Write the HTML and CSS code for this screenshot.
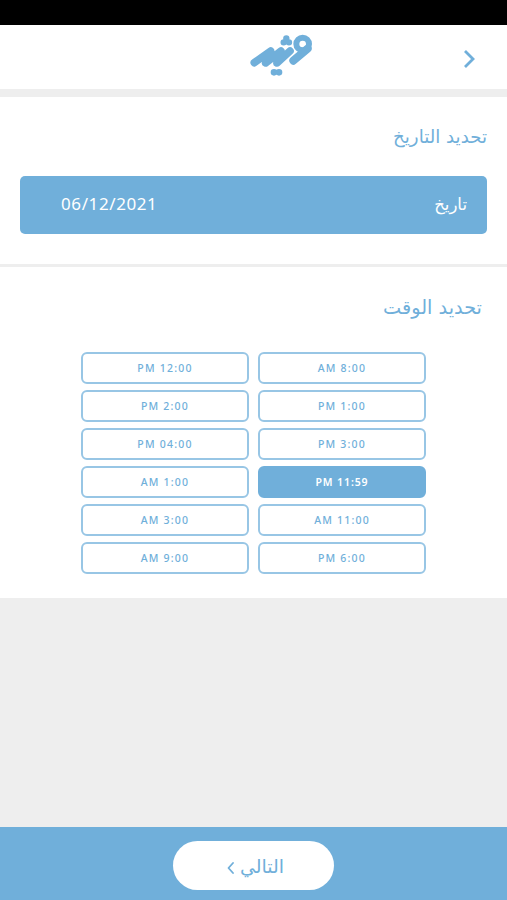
FILE: index.html
```html
<!DOCTYPE html>
<html lang="ar" dir="rtl">
<head>
<meta charset="UTF-8">
<meta name="viewport" content="width=device-width, initial-scale=1.0">
<title>تحديد التاريخ</title>
<link rel="stylesheet" href="styles.css">
</head>
<body>

<div class="status-bar"></div>

<header class="header">
    <svg class="back" viewBox="0 0 12 20"><path d="M2 2l8 8-8 8"/></svg>
    <svg class="logo" viewBox="30 42 189 129">
        <path d="M43 128L92 93L77 129L123 93L111 129L150 93" stroke-width="23"/>
        <path d="M203 86L160 122" stroke-width="24"/>
        <circle cx="188" cy="72" r="19" stroke-width="18"/>
        <path d="M131 67h0M147 67h0M139 55v9" stroke-width="19"/>
        <path d="M102 157h0M117 157h0" stroke-width="20"/>
    </svg>
</header>

<section class="date">
    <h2>تحديد التاريخ</h2>
    <div class="date-box">
        <span class="date-label">تاريخ</span>
        <span class="date-value" dir="ltr">06/12/2021</span>
    </div>
</section>

<section class="time">
    <h2>تحديد الوقت</h2>
    <div class="slots" dir="ltr">
        <button class="slot">PM 12:00</button>
        <button class="slot">AM 8:00</button>
        <button class="slot">PM 2:00</button>
        <button class="slot">PM 1:00</button>
        <button class="slot">PM 04:00</button>
        <button class="slot">PM 3:00</button>
        <button class="slot">AM 1:00</button>
        <button class="slot active">PM 11:59</button>
        <button class="slot">AM 3:00</button>
        <button class="slot">AM 11:00</button>
        <button class="slot">AM 9:00</button>
        <button class="slot">PM 6:00</button>
    </div>
</section>

<footer class="footer">
    <button class="next">
        <span>التالي</span>
        <svg viewBox="0 0 8 12"><path d="M6 1L1.5 6L6 11"/></svg>
    </button>
</footer>

</body>
</html>
```

FILE: styles.css
```css
* {
    box-sizing: border-box;
}
body {
    margin: 0;
    height: 900px;
    display: flex;
    flex-direction: column;
    background-color: #eeeeee;
    color: #70afda;
    font-family: "DejaVu Sans", sans-serif;
}
h2 {
    margin: 0;
    font-size: 18.2px;
    font-weight: normal;
    line-height: 24px;
}
button {
    padding: 0;
    border: none;
    color: #70afda;
    background-color: white;
    cursor: pointer;
}
svg {
    fill: none;
    stroke: #70afda;
    stroke-linecap: round;
    stroke-linejoin: round;
}
.status-bar {
    height: 25px;
    background-color: black;
}
.header {
    height: 64px;
    padding: 10px 32px 0;
    display: grid;
    grid-template-columns: 12px 1fr 12px;
    align-items: start;
    background-color: white;
}
.back {
    width: 12px;
    height: 20px;
    margin-top: 14px;
    stroke-width: 2.8;
    stroke-linecap: butt;
    stroke-linejoin: miter;
}
.logo {
    width: 63px;
    height: 43px;
    margin-right: 150px;
    margin-top: -1px;
}
.date {
    height: 167px;
    margin-top: 8px;
    padding: 28px 20px 0;
    background-color: white;
}
.date-box {
    height: 58px;
    margin-top: 27px;
    padding: 0 20px 1px 40px;
    display: flex;
    justify-content: space-between;
    align-items: center;
    border-radius: 5px;
    background-color: #70afda;
    color: white;
}
.date-label {
    font-size: 16.5px;
}
.date-value {
    padding: 0 0 2px 1px;
    font-family: "Noto Sans", sans-serif;
    font-size: 17px;
    letter-spacing: 0.6px;
}
.time {
    height: 331px;
    margin-top: 3px;
    padding: 29px 25px 0;
    background-color: white;
}
.time h2 {
    font-size: 19.3px;
}
.slots {
    width: 345px;
    margin: 32px 56px 0 0;
    display: grid;
    grid-template-columns: 1fr 1fr;
    grid-auto-rows: 32px;
    gap: 6px 9px;
}
.slot {
    border: 2px solid #98c6e5;
    border-radius: 6px;
    font-family: "Noto Sans", sans-serif;
    font-size: 10.5px;
    font-weight: 500;
    letter-spacing: 1.2px;
}
.slot.active {
    border-color: #70afda;
    background-color: #70afda;
    color: white;
    font-weight: 600;
    letter-spacing: 0.9px;
}
.footer {
    height: 73px;
    margin-top: auto;
    padding-top: 14px;
    display: flex;
    justify-content: center;
    align-items: flex-start;
    background-color: #70afda;
}
.next {
    width: 161px;
    height: 49px;
    padding-left: 4px;
    display: flex;
    justify-content: center;
    align-items: center;
    gap: 5px;
    border-radius: 25px;
    font-family: "DejaVu Sans", sans-serif;
    font-size: 19px;
}
.next svg {
    width: 8px;
    height: 12px;
    margin-top: 5px;
    stroke-width: 1.8;
}
```
